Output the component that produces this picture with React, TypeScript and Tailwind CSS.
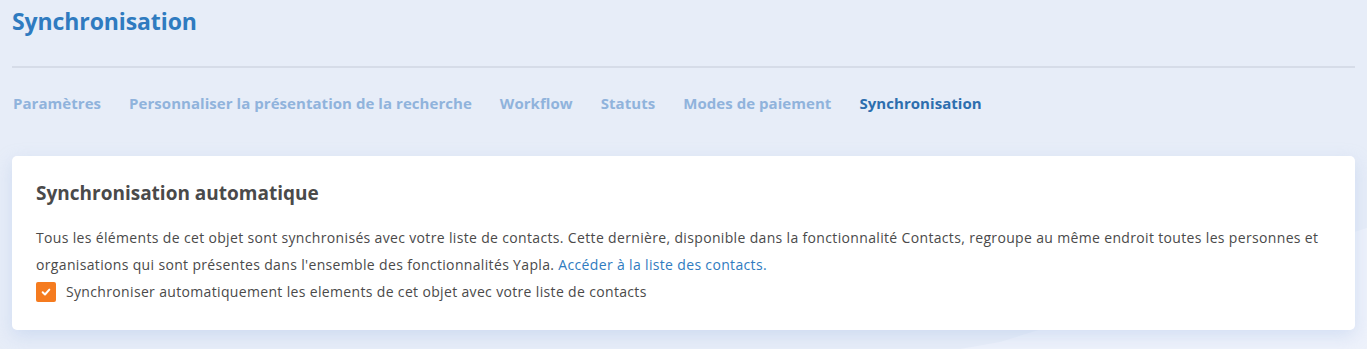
import React, { useState } from 'react';

const tabs = [
  'Paramètres',
  'Personnaliser la présentation de la recherche',
  'Workflow',
  'Statuts',
  'Modes de paiement',
  'Synchronisation',
];

const App: React.FC = () => {
  const [checked, setChecked] = useState(true);
  const active = 'Synchronisation';

  return (
    <div
      className="relative min-h-[349px] w-full overflow-hidden bg-[#e7edf8] px-3"
      style={{ fontFamily: '"Open Sans", Lato, sans-serif' }}
    >
      {/* soft light wedge bottom right */}
      <div className="pointer-events-none absolute inset-0 bg-[#eef2fb] [clip-path:polygon(1000px_342px,100%_228px,100%_100%,960px_100%)]" />

      <div className="relative">
        {/* Header */}
        <h1 className="pt-[5px] text-[23px] font-bold leading-[32px] tracking-[-0.1px] text-[#2f7bc0]">Synchronisation</h1>
        <div className="mt-[29px] h-[2px] w-full bg-[#d6dce8]" />

        {/* Tabs */}
        <nav className="flex gap-[28px] pt-[25px] pl-px">
          {tabs.map((tab) => (
            <button
              key={tab}
              className={`text-[15px] font-bold leading-[20px] tracking-[0.05px] ${
                tab === active ? 'text-[#2d6eae]' : 'text-[#90b3dc]'
              }`}
            >
              {tab}
            </button>
          ))}
        </nav>

        {/* Card */}
        <div className="mt-[43px] rounded-[5px] bg-white px-6 pt-[24px] pb-[25px] shadow-[0_6px_18px_rgba(160,185,230,0.35)]">
          <h2 className="text-[19px] font-bold leading-[26px] text-[#4a4a4a]">Synchronisation automatique</h2>
          <p className="mt-[18px] text-[14px] leading-[27px] tracking-[0.34px] text-[#4a4a4a]">
            Tous les éléments de cet objet sont synchronisés avec votre liste de contacts. Cette dernière, disponible dans la
            fonctionnalité Contacts, regroupe au même endroit toutes les personnes et organisations qui sont présentes dans
            l'ensemble des fonctionnalités Yapla.{' '}
            <a className="text-[#2f7bc0]" href="#">
              Accéder à la liste des contacts.
            </a>
          </p>
          <label className="flex cursor-pointer items-center gap-[10px] text-[14px] leading-[27px] tracking-[0.34px] text-[#4a4a4a]">
            <span
              onClick={() => setChecked(!checked)}
              className={`flex h-[20px] w-[20px] items-center justify-center rounded-[2px] ${
                checked ? 'bg-[#f57b1f]' : 'border border-gray-300 bg-white'
              }`}
            >
              {checked && (
                <svg viewBox="0 0 12 12" className="h-[10px] w-[10px]">
                  <path d="M2 6.3 4.8 9 10 3.2" fill="none" stroke="white" strokeWidth="2.4" strokeLinecap="round" strokeLinejoin="round" />
                </svg>
              )}
            </span>
            Synchroniser automatiquement les elements de cet objet avec votre liste de contacts
          </label>
        </div>
      </div>
    </div>
  );
};

export default App;
